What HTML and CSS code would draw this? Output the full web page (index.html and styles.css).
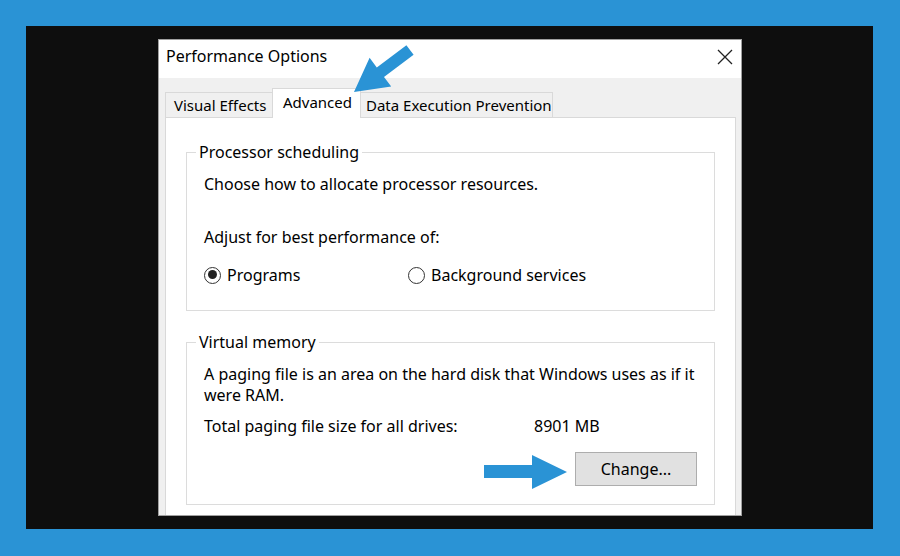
FILE: index.html
```html
<!DOCTYPE html>
<html>
<head>
<meta charset="utf-8">
<link rel="stylesheet" href="styles.css">
</head>
<body>
<div class="screen">
  <div class="frame">
    <div class="dialog">
      <div class="titlebar">
        <span class="title">Performance Options</span>
        <svg class="close" width="16" height="16" viewBox="0 0 16 16"><path d="M1 1L15 15M15 1L1 15" stroke="#222" stroke-width="1.3" fill="none"/></svg>
      </div>
      <div class="body">
        <div class="tabs">
          <div class="tab tab-ve">Visual Effects</div>
          <div class="tab tab-adv active">Advanced</div>
          <div class="tab tab-dep">Data Execution Prevention</div>
        </div>
        <div class="panel">
          <fieldset class="group group-proc">
            <legend>Processor scheduling</legend>
            <div class="group-inner">
              <p class="line">Choose how to allocate processor resources.</p>
              <p class="line line-adjust">Adjust for best performance of:</p>
              <div class="radios">
                <label class="radio radio-prog"><span class="dot checked"></span>Programs</label>
                <label class="radio"><span class="dot"></span>Background services</label>
              </div>
            </div>
          </fieldset>
          <fieldset class="group group-vm">
            <legend>Virtual memory</legend>
            <div class="group-inner">
              <p class="line">A paging file is an area on the hard disk that Windows uses as if it<br>were RAM.</p>
              <div class="size-row"><span class="size-label">Total paging file size for all drives:</span><span>8901 MB</span></div>
              <div class="btn-row"><button class="btn">Change...</button></div>
            </div>
          </fieldset>
        </div>
      </div>
    </div>
  </div>
  <svg class="arrows" width="900" height="556" viewBox="0 0 900 556">
    <polygon fill="#2a93d5" points="354,92 369.6,57.8 376.8,67.4 406.4,45.2 413.6,54.8 384,77 391.2,86.6"/>
    <polygon fill="#2a93d5" points="484,465 532,465 532,455 567,472 532,489 532,478 484,478"/>
  </svg>
</div>
</body>
</html>
```
FILE: styles.css
```css
html, body {
  margin: 0;
  padding: 0;
}
body {
  font-family: "Noto Sans", "Open Sans", sans-serif;
  font-size: 16px;
  color: #000;
}
.screen {
  position: relative;
  width: 900px;
  height: 556px;
  box-sizing: border-box;
  background: #2a93d5;
  padding: 26px 27px 27px 26px;
}
.frame {
  height: 503px;
  background: #0e0e0e;
  box-sizing: border-box;
  padding: 13px 0 0 132px;
}
.dialog {
  width: 584px;
  height: 477px;
  box-sizing: border-box;
  border: 1px solid #a0a0a0;
  background: #f0f0f0;
  overflow: hidden;
}
.titlebar {
  height: 38px;
  background: #fff;
  display: flex;
  align-items: center;
  justify-content: space-between;
  padding: 0 8px 0 7px;
}
.title {
  font-size: 16px;
  margin-top: -6px;
}
.close {
  margin-top: -5px;
}
.body {
  padding: 10px 5px 0 6px;
}
.tabs {
  display: flex;
  align-items: flex-end;
  height: 29px;
}
.tab {
  box-sizing: border-box;
  height: 25px;
  border: 1px solid #d9d9d9;
  border-bottom: none;
  background: #f0f0f0;
  padding: 0 0 0 8px;
  font-size: 15px;
  line-height: 24px;
  white-space: nowrap;
}
.tab-ve { width: 107px; border-right: none; }
.tab-adv {
  width: 89px;
  height: 30px;
  margin-bottom: -1px;
  background: #fff;
  padding-left: 10px;
  line-height: 26px;
  position: relative;
}
.tab-dep { width: 192px; border-left: none; padding-left: 5px; }
.panel {
  width: 571px;
  height: 420px;
  box-sizing: border-box;
  border: 1px solid #d9d9d9;
  background: #fff;
  padding: 24px 20px 0 20px;
}
.group {
  margin: 0 0 21px 0;
  padding: 0;
  border: 1px solid #dcdcdc;
  min-width: 0;
}
.group legend {
  margin-left: 9px;
  padding: 0 3px;
  line-height: 20px;
}
.group-inner {
  padding: 12px 17px 0 17px;
}
.group-proc .group-inner { height: 148px; box-sizing: border-box; }
.group-vm .group-inner { height: 152px; box-sizing: border-box; }
.line {
  margin: 0;
  line-height: 21px;
}
.line-adjust {
  margin-top: 32px;
}
.radios {
  display: flex;
  margin-top: 17px;
  line-height: 20px;
}
.radio {
  display: flex;
  align-items: center;
}
.radio-prog { width: 204px; }
.dot {
  width: 17px;
  height: 17px;
  box-sizing: border-box;
  border: 1.5px solid #333;
  border-radius: 50%;
  margin: 0 6px 0 0;
  position: relative;
}
.dot.checked::after {
  content: "";
  position: absolute;
  left: 2.5px;
  top: 2.5px;
  width: 9px;
  height: 9px;
  border-radius: 50%;
  background: #222;
}
.size-row {
  display: flex;
  margin-top: 10px;
  line-height: 21px;
}
.size-label { width: 330px; }
.btn-row {
  display: flex;
  justify-content: flex-end;
  margin-top: 15px;
}
.btn {
  width: 122px;
  height: 34px;
  box-sizing: border-box;
  border: 1px solid #adadad;
  background: #e1e1e1;
  font-family: inherit;
  font-size: 16px;
  color: #000;
  padding: 0;
}
.arrows {
  position: absolute;
  left: 0;
  top: 0;
  pointer-events: none;
}
```
